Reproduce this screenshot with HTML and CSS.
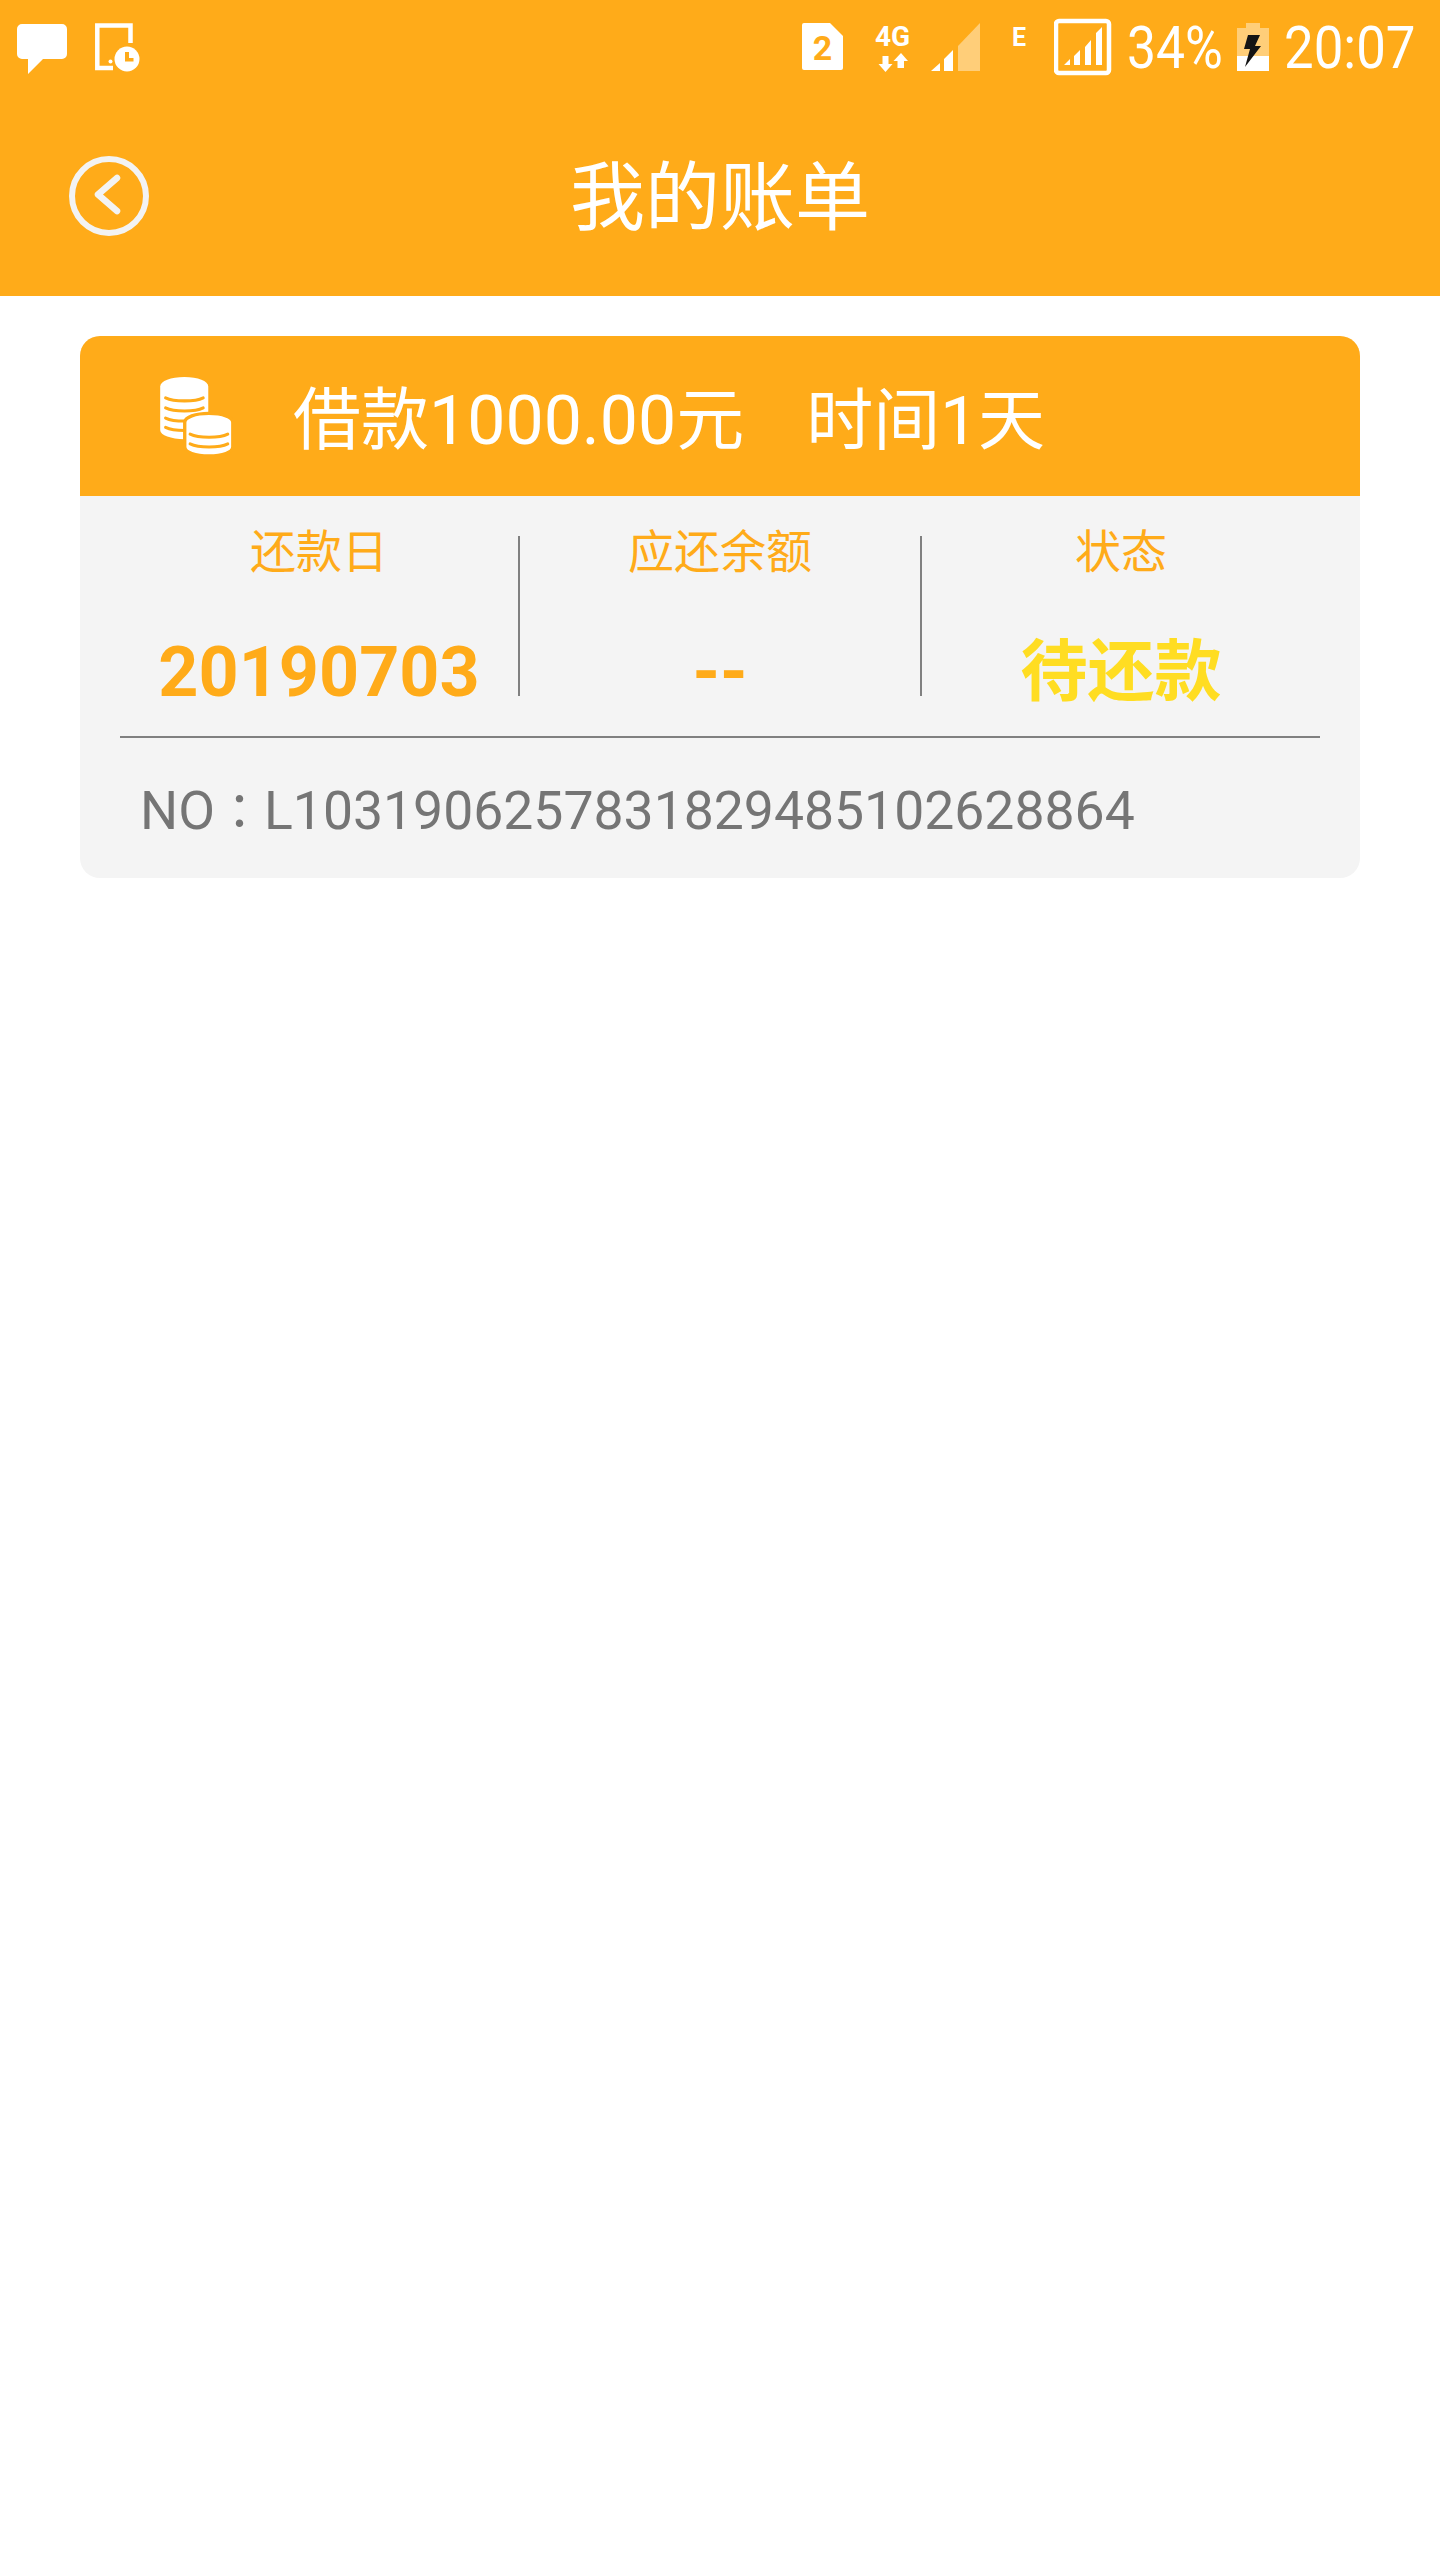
FILE: index.html
```html
<!DOCTYPE html>
<html lang="zh-CN">
<head>
<meta charset="utf-8">
<title>我的账单</title>
<link rel="stylesheet" href="styles.css">
</head>
<body>
<header class="top">
  <div class="status">
    <svg class="ic ic-msg" width="50" height="96" viewBox="17 0 50 96"><path fill="#fff" d="M22 24h40a5 5 0 0 1 5 5v25a5 5 0 0 1-5 5H43L28 74V59h-6a5 5 0 0 1-5-5V29a5 5 0 0 1 5-5z"/></svg>
    <svg class="ic ic-tab" width="46" height="96" viewBox="95 0 46 96"><path fill="none" stroke="#fff" stroke-width="4.5" d="M130.500 43V25.500H97.300V68H113"/><circle cx="110.500" cy="61.500" r="2" fill="#fff"/><circle cx="127" cy="59" r="12.500" fill="#fff"/><path fill="#FFAB19" d="M125 52h4v6h4.500v3.500H125z"/></svg>
    <div class="status-right">
      <svg class="ic" width="42" height="96" viewBox="802 0 42 96"><path fill="#fff" d="M804 23h26l13 13v32a2 2 0 0 1-2 2h-37a2 2 0 0 1-2-2V25a2 2 0 0 1 2-2z"/><text x="822.500" y="60" class="sim-num">2</text></svg>
      <svg class="ic ic-4g" width="40" height="96" viewBox="875 0 40 96"><text x="875" y="46" class="net">4G</text><path fill="#fff" d="M882.500 56h6v8h4l-7 8-7-8h4zM901 53l7 8h-4v7h-6.500v-7h-4z"/></svg>
      <svg class="ic ic-sig" width="50" height="96" viewBox="931 0 50 96"><path fill="#fff" d="M931 71l9-8v8zM944 59l9-9v21h-9z"/><path fill="#fff" opacity=".42" d="M958 46l22-23v48h-22z"/></svg>
      <svg class="ic ic-e" width="15" height="96" viewBox="1012 0 15 96"><text x="1012" y="46" class="edge">E</text></svg>
      <svg class="ic ic-sig2" width="58" height="96" viewBox="1054 0 58 96"><rect x="1056" y="21" width="53" height="52" rx="3" fill="none" stroke="#fff" stroke-width="4.500"/><path fill="#fff" d="M1064 65l6-6v6zM1074 56l6-6v15h-6zM1085 47l6-7v25h-6zM1096 33l6-6v38h-6z"/></svg>
      <span class="pct">34%</span>
      <svg class="ic ic-bat" width="32" height="96" viewBox="1236 0 32 96"><path fill="#fff" opacity=".42" d="M1245 23h14v5h9v28h-32V28h9z"/><path fill="#fff" d="M1236 56h32v15h-32z"/><path fill="#141414" d="M1247 35h12l-5 11h6l-16 21 5-18h-6z"/></svg>
      <span class="clock">20:07</span>
    </div>
  </div>
  <nav class="nav">
    <svg class="back" width="80" height="80" viewBox="0 0 80 80"><circle cx="40" cy="40" r="37" fill="none" stroke="#f3f3f3" stroke-width="6"/><path fill="none" stroke="#f3f3f3" stroke-width="6.500" stroke-linecap="round" stroke-linejoin="round" d="M48 22L29 38.500 48 55"/></svg>
    <h1 class="title">我的账单</h1>
  </nav>
</header>
<main class="main">
  <section class="card">
    <div class="card-head">
      <svg class="coins" width="73" height="79" viewBox="300 170 216 235">
        <path fill="#fff" d="M300 198c0-16 32-28 72-28s71 12 71 28v130c0 16-31 27-71 27s-72-11-72-27z"/>
        <g fill="none" stroke="#FFAB19" stroke-width="9" stroke-linecap="round">
          <path d="M316 232c25 12 88 12 112 0M316 262c25 12 88 12 112 0M316 292c25 12 88 12 112 0M316 320c25 12 88 12 112 0"/>
        </g>
        <path fill="#fff" stroke="#FFAB19" stroke-width="10" d="M373 305c0-16 32-27 72-27s71 11 71 27v73c0 16-31 27-71 27s-72-11-72-27z"/>
        <g fill="none" stroke="#FFAB19" stroke-width="9" stroke-linecap="round">
          <path d="M389 340c25 12 88 12 112 0M389 369c25 12 88 12 112 0"/>
        </g>
      </svg>
      <span class="amount">借款1000.00元</span>
      <span class="term">时间1天</span>
    </div>
    <div class="card-body">
      <div class="stats">
        <div class="stat">
          <div class="stat-label">还款日</div>
          <div class="stat-value">20190703</div>
        </div>
        <div class="stat">
          <div class="stat-label">应还余额</div>
          <div class="stat-value">--</div>
        </div>
        <div class="stat">
          <div class="stat-label">状态</div>
          <div class="stat-value pending">待还款</div>
        </div>
      </div>
      <div class="order">NO<span class="colon" lang="zh-TW">：</span>L1031906257831829485102628864</div>
    </div>
  </section>
</main>
</body>
</html>
```

FILE: styles.css
```css
* { box-sizing: border-box; }
html, body { margin: 0; padding: 0; background: #fff; }
body {
  width: 1440px;
  min-height: 2560px;
  font-family: Roboto, "Noto Sans CJK SC", sans-serif;
}
.top { background: #FFAB19; height: 296px; color: #fff; }
.status {
  display: flex;
  height: 96px;
  padding-left: 17px;
}
.ic { display: block; flex: none; }
.ic-tab { margin-left: 28px; }
.status-right {
  display: flex;
  margin-left: auto;
  padding-right: 24px;
}
.ic-4g { margin-left: 31px; }
.ic-sig { margin-left: 16px; }
.ic-e { margin-left: 31px; }
.ic-sig2 { margin-left: 27px; }
.sim-num { font: 700 34px Roboto, sans-serif; fill: #FFAB19; text-anchor: middle; }
.net { font: 700 28px Roboto, sans-serif; fill: #fff; }
.edge { font: 700 25px Roboto, sans-serif; fill: #fff; }
.pct, .clock {
  font-size: 60px;
  line-height: 96px;
  color: #fff;
  white-space: nowrap;
  transform-origin: left center;
}
.pct { width: 94px; margin-left: 15px; transform: scaleX(.86); }
.ic-bat { margin-left: 16px; }
.clock { width: 132px; margin-left: 15px; transform: scaleX(.88); }
.nav {
  display: flex;
  align-items: center;
  justify-content: center;
  height: 200px;
  position: relative;
  padding-top: 4px;
}
.back { position: absolute; left: 69px; top: 60px; }
.title { margin: 0; font-size: 75px; font-weight: 400; line-height: 1; color: #fff; }
.main { padding: 40px 80px 0; }
.card { border-radius: 20px; overflow: hidden; background: #f4f4f4; }
.card-head {
  display: flex;
  align-items: center;
  height: 160px;
  padding-left: 80px;
  padding-bottom: 4px;
  background: #FFAB19;
  color: #fff;
  font-size: 67px;
}
.coins { display: block; flex: none; margin: 4px 60px 0 0; }
.amount { font-size: 68px; }
.term { margin-left: 62px; }
.card-body { padding: 40px 40px 0; }
.stats {
  display: grid;
  grid-template-columns: 400px 402px 398px;
  padding-bottom: 40px;
  border-bottom: 2px solid #808080;
}
.stat {
  height: 160px;
  text-align: center;
  border-right: 2px solid #808080;
}
.stat:last-child { border-right: 0; }
.stat-label { font-size: 46px; line-height: 44px; color: #FFAB19; margin-top: -6px; }
.stat-value {
  font-size: 70px;
  font-weight: 700;
  line-height: 80px;
  margin-top: 58px;
  color: #FFAB19;
}
.pending { color: #FFDD22; font-size: 67px; }
.order {
  height: 140px;
  padding-left: 20px;
  font-size: 53.5px;
  line-height: 146px;
  color: #757575;
  white-space: nowrap;
}
.colon { font-family: "Noto Sans CJK TC", sans-serif; font-size: 49px; line-height: 1; }
```
